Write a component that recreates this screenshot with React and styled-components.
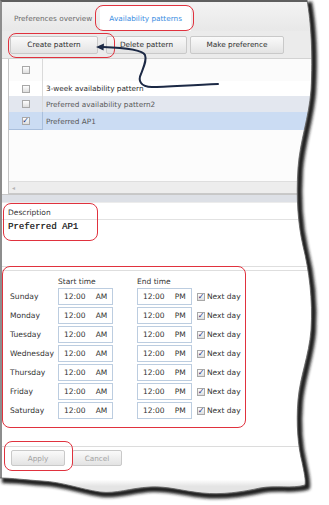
import React from 'react';
import styled, { createGlobalStyle } from 'styled-components';

const GlobalStyle = createGlobalStyle`
  html, body { margin: 0; padding: 0; background: #fff; }
  body { font-family: "DejaVu Sans", Verdana, sans-serif; }
`;

const Frame = styled.div`
  position: relative;
  width: 329px;
  height: 505px;
  overflow: hidden;
  background: #fff;
`;

const Sheet = styled.div`
  width: 318px;
  height: 495px;
  box-sizing: border-box;
  border-top: 2px solid #5f5f5f;
  border-left: 2px solid #8d8d8d;
  background: #fff;
  display: flex;
  flex-direction: column;
`;

const TabBar = styled.div`
  height: 29px;
  flex: none;
  display: flex;
  align-items: flex-end;
  gap: 2px;
  padding-left: 6px;
  background: linear-gradient(#f3f3f3, #e8e8e8);
`;

const Tab = styled.div`
  height: 25px;
  display: flex;
  align-items: center;
  padding: 0 ${p => (p.$active ? 9 : 6)}px;
  font-size: 7.3px;
  color: ${p => (p.$active ? '#3b8ee2' : '#6b6b6b')};
  background: ${p => (p.$active ? '#fff' : 'transparent')};
  border-radius: 3px 3px 0 0;
`;

const Highlight = styled.div`
  position: relative;
  display: ${p => (p.$block ? 'block' : 'inline-flex')};
  &::after {
    content: '';
    position: absolute;
    inset: ${p => p.$inset};
    border: 1.5px solid #e0323e;
    border-radius: 8px;
    pointer-events: none;
  }
`;

const Toolbar = styled.div`
  height: 28px;
  flex: none;
  box-sizing: border-box;
  display: flex;
  align-items: center;
  padding: 0 8px;
  background: #ebebeb;
  border-bottom: 1px solid #d2d2d2;
`;

const Button = styled.div`
  width: ${p => p.$w}px;
  height: ${p => p.$h || 18}px;
  margin-right: ${p => p.$mr || 0}px;
  box-sizing: border-box;
  display: flex;
  align-items: center;
  justify-content: center;
  font-size: 7.3px;
  color: ${p => (p.$disabled ? '#a3a3a3' : '#2f2f2f')};
  background: linear-gradient(#fafafa, #e3e3e3);
  border: 1px solid #c9c9c9;
  border-radius: 2px;
`;

const Grid = styled.div`
  height: 135px;
  flex: none;
  box-sizing: border-box;
  margin-left: 6px;
  border-left: 1px solid #c5c5c5;
  border-bottom: 1px solid #c9c9c9;
  display: flex;
  flex-direction: column;
  background: #fcfcfc;
`;

const rowTones = { head: '#fbfbfb', plain: '#ffffff', alt: '#e3e7ef', sel: '#cbdcf3' };

const Row = styled.div`
  height: ${p => p.$h}px;
  display: flex;
  background: ${p => rowTones[p.$tone]};
`;

const CheckCell = styled.div`
  width: 34px;
  flex: none;
  display: flex;
  align-items: center;
  justify-content: center;
  border-right: 1px solid ${p => (p.$sel ? '#a9bfdd' : '#dadada')};
  border-bottom: ${p => (p.$sel ? '1px solid #a9bfdd' : 'none')};
  box-sizing: border-box;
`;

const NameCell = styled.div`
  flex: 1;
  display: flex;
  align-items: center;
  padding-left: 3px;
  font-size: 7.3px;
  color: ${p => (p.$dark ? '#2e2e2e' : '#5a5a5a')};
`;

const Box = styled.span`
  width: 8px;
  height: 8px;
  flex: none;
  box-sizing: border-box;
  display: inline-flex;
  align-items: center;
  justify-content: center;
  border: 1px solid #a8a8a8;
  background: linear-gradient(#fefefe, #dedede);
  color: #23347e;
  font-size: 8px;
  line-height: 1;
  font-weight: bold;
`;

const GridFill = styled.div`
  flex: 1;
`;

const HScroll = styled.div`
  height: 11px;
  display: flex;
  align-items: center;
  padding-left: 3px;
  background: #ededed;
  border-top: 1px solid #dedede;
  color: #b4b4b4;
  font-size: 6px;
`;

const Splitter = styled.div`
  height: 7px;
  flex: none;
  background: #dde0e6;
  border-top: 1px solid #c7c7c7;
  border-bottom: 1px solid #ececec;
`;

const DescSection = styled.div`
  height: 63px;
  flex: none;
  padding-top: 4px;
  box-sizing: border-box;
`;

const DescLabel = styled.div`
  font-size: 7.5px;
  color: #333;
  padding-left: 6px;
  height: 11px;
  display: flex;
  align-items: center;
`;

const DescText = styled.div`
  margin-top: 1px;
  border-top: 1px solid #e2e2e2;
  padding: 2px 0 0 6px;
  font-family: "Liberation Mono", "Courier New", monospace;
  font-size: 9px;
  color: #2a2a2a;
  text-shadow: 0.2px 0 0 #555;
`;

const Divider = styled.div`
  height: 3px;
  flex: none;
  border-top: 1.5px solid #dedede;
  border-bottom: 1.5px solid #dedede;
`;

const Schedule = styled.div`
  display: grid;
  grid-template-columns: 48px 79px 60px auto;
  grid-template-rows: 13px;
  grid-auto-rows: 17px;
  row-gap: 2px;
  align-items: center;
  padding: 2px 0 0 8px;
  height: 175px;
  box-sizing: border-box;
`;

const Corner = styled.div`
  grid-column: 1;
`;

const ColHead = styled.div`
  font-size: 7.5px;
  color: #333;
  align-self: end;
`;

const DayLabel = styled.div`
  grid-column: 1;
  font-size: 7.6px;
  color: #333;
`;

const TimeInput = styled.div`
  width: 55px;
  height: 17px;
  box-sizing: border-box;
  display: flex;
  align-items: center;
  gap: 10px;
  padding-left: 5px;
  border: 1px solid #bccde0;
  background: #fff;
  font-size: 7.5px;
  color: #333;
`;

const NextDay = styled.label`
  display: flex;
  align-items: center;
  gap: 2px;
  font-size: 7.5px;
  color: #333;
`;

const Footer = styled.div`
  height: 27px;
  flex: none;
  box-sizing: border-box;
  display: flex;
  align-items: flex-start;
  gap: 7px;
  padding: 3px 0 0 9px;
  border-top: 1px solid #dcdcdc;
`;

const BottomStrip = styled.div`
  flex: 1;
  background: linear-gradient(#fff 0, #fff 30%, #e4e4e4 60%);
`;

const Overlay = styled.svg`
  position: absolute;
  left: 0;
  top: 0;
  pointer-events: none;
`;

const days = ['Sunday', 'Monday', 'Tuesday', 'Wednesday', 'Thursday', 'Friday', 'Saturday'];

const patterns = [
  { name: '3-week availability pattern', tone: 'plain', h: 15, dark: true },
  { name: 'Preferred availability pattern2', tone: 'alt', h: 16 },
  { name: 'Preferred AP1', tone: 'sel', h: 18, checked: true },
];

const edge =
  'M307,0 C311,22 313,55 311,90 C309,118 300,140 298,168 C296,198 298,224 303,246 ' +
  'C309,270 313,300 311,330 C309,356 300,376 298,400 C296,424 298,446 302,462 ' +
  'C304,472 306,480 305,485 C292,489 276,485 260,488 C242,492 222,495 202,493 ' +
  'C182,491 168,486 150,487 C130,488 116,494 100,492 C80,489 62,482 42,481 C26,480 12,478 0,478';

const paper = `M0,0 L${edge.slice(1)} Z`;

function TornEdge() {
  return (
    <Overlay width="329" height="505" viewBox="0 0 329 505">
      <defs>
        <clipPath id="outside">
          <path d={`M0,0 H329 V505 H0 Z ${paper}`} clipRule="evenodd" />
        </clipPath>
        <filter id="soft" x="-10%" y="-10%" width="120%" height="120%">
          <feGaussianBlur stdDeviation="1.8" />
        </filter>
      </defs>
      <path d={`M0,0 H329 V505 H0 Z ${paper}`} fill="#fff" fillRule="evenodd" />
      <g clipPath="url(#outside)">
        <path d={edge} fill="none" stroke="#1e1e1e" strokeWidth="6" filter="url(#soft)" transform="translate(2,2)" />
      </g>
      <path d={edge} fill="none" stroke="#5a5a5a" strokeWidth="0.8" />
    </Overlay>
  );
}

function Arrow() {
  return (
    <Overlay width="329" height="505" viewBox="0 0 329 505">
      <path
        d="M218,84 C190,85 166,87 152,87 C140,87 138,80 141,74 C144,66 147,60 145,55 C143,51 133,48 103,47"
        fill="none"
        stroke="#1c2945"
        strokeWidth="2"
        strokeLinecap="round"
      />
      <polygon points="96,47 104,43.5 103.5,50.5" fill="#1c2945" />
    </Overlay>
  );
}

function Check({ checked }) {
  return <Box>{checked ? '✓' : ''}</Box>;
}

export default function App() {
  return (
    <Frame>
      <GlobalStyle />
      <Sheet>
        <TabBar>
          <Tab>Preferences overview</Tab>
          <Highlight $inset="-1px -3px 0 -5px">
            <Tab $active>Availability patterns</Tab>
          </Highlight>
        </TabBar>

        <Toolbar>
          <Highlight $inset="-3px -9px -4px -2px">
            <Button $w={88} $mr={8}>Create pattern</Button>
          </Highlight>
          <Button $w={81} $mr={3}>Delete pattern</Button>
          <Button $w={94}>Make preference</Button>
        </Toolbar>

        <Grid>
          <Row $tone="head" $h={22}>
            <CheckCell><Check /></CheckCell>
            <NameCell />
          </Row>
          {patterns.map(p => (
            <Row key={p.name} $tone={p.tone} $h={p.h}>
              <CheckCell $sel={p.tone === 'sel'}><Check checked={p.checked} /></CheckCell>
              <NameCell $dark={p.dark}>{p.name}</NameCell>
            </Row>
          ))}
          <GridFill />
          <HScroll>◂</HScroll>
        </Grid>

        <Splitter />

        <DescSection>
          <Highlight $block $inset="-4px 220px -9px 1px">
            <DescLabel>Description</DescLabel>
            <DescText>Preferred AP1</DescText>
          </Highlight>
        </DescSection>

        <Divider />

        <Highlight $block $inset="-5px 72px 18px 0">
          <Schedule>
            <Corner />
            <ColHead>Start time</ColHead>
            <ColHead>End time</ColHead>
            {days.map(d => (
              <React.Fragment key={d}>
                <DayLabel>{d}</DayLabel>
                <TimeInput><span>12:00</span><span>AM</span></TimeInput>
                <TimeInput><span>12:00</span><span>PM</span></TimeInput>
                <NextDay><Check checked />Next day</NextDay>
              </React.Fragment>
            ))}
          </Schedule>
        </Highlight>

        <Footer>
          <Highlight $inset="-9px -8px -5px -7px">
            <Button $w={54} $h={16} $disabled>Apply</Button>
          </Highlight>
          <Button $w={50} $h={16} $disabled>Cancel</Button>
        </Footer>
        <BottomStrip />
      </Sheet>
      <Arrow />
      <TornEdge />
    </Frame>
  );
}
